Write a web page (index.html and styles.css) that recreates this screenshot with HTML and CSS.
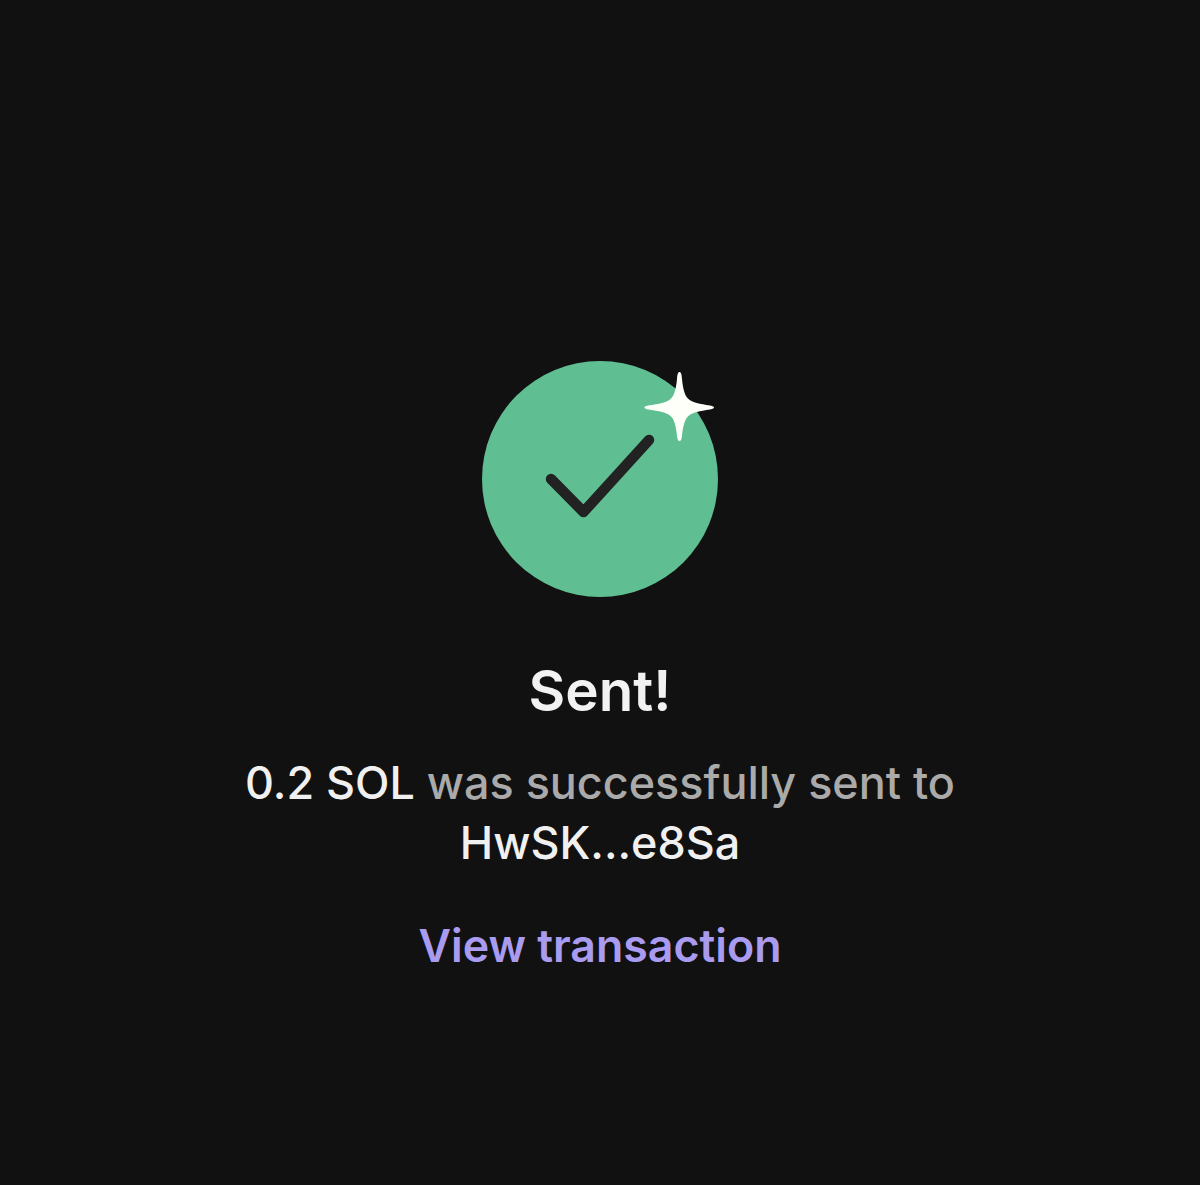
FILE: index.html
```html
<!DOCTYPE html>
<html lang="en">
<head>
  <meta charset="UTF-8">
  <title>Sent</title>
  <link rel="stylesheet" href="styles.css">
</head>
<body>
  <main class="sent">
    <svg class="sent-icon" width="236" height="236" viewBox="0 0 236 236">
      <circle cx="118" cy="118" r="118" fill="#5fbf92"/>
      <path d="M69 118 L101.500 151 L167 79" fill="none" stroke="#222222" stroke-width="10.500" stroke-linecap="round" stroke-linejoin="round"/>
      <path d="M197.500 11 C199 11 199.600 13 200 18 C201 29 203 35 206.500 38 C210 41.500 218 43 228 44.500 C231 45 232 46 232 46.500 C232 47 231 48 228 48.500 C218 50 210 51.500 206.500 55 C203 58 201 64 200 75 C199.600 78 199 80 197.500 80 C196 80 195.400 78 195 75 C194 64 192 58 188.500 55 C185 51.500 177 50 166 48.500 C163 48 162.500 47 162.500 46.500 C162.500 46 163 45 166 44.500 C177 43 185 41.500 188.500 38 C192 35 194 29 195 18 C195.400 13 196 11 197.500 11 Z" fill="#fffffa"/>
    </svg>
    <h1 class="sent-title">Sent!</h1>
    <p class="sent-text"><span class="sent-strong">0.2 SOL</span> was successfully sent to <span class="sent-strong">HwSK...e8Sa</span></p>
    <a class="sent-link" href="#">View transaction</a>
  </main>
</body>
</html>
```

FILE: styles.css
```css
body { margin: 0; background-color: #111111; font-family: Inter, "Liberation Sans", sans-serif; }
.sent { min-height: 1185px; box-sizing: border-box; padding-top: 361px; display: flex; flex-direction: column; align-items: center; text-align: center; }
.sent-icon { display: block; }
.sent-title { margin: 62px 0 0; font-size: 56.500px; line-height: 64px; font-weight: 600; color: #f2f2f2; }
.sent-text { margin: 30px 0 0; width: 740px; font-size: 44.900px; line-height: 60px; font-weight: 500; color: #aaaaaa; }
.sent-strong { color: #f0f0f0; }
.sent-link { margin-top: 43px; font-size: 44.700px; line-height: 60px; font-weight: 600; color: #a99cf0; text-decoration: none; }
```
